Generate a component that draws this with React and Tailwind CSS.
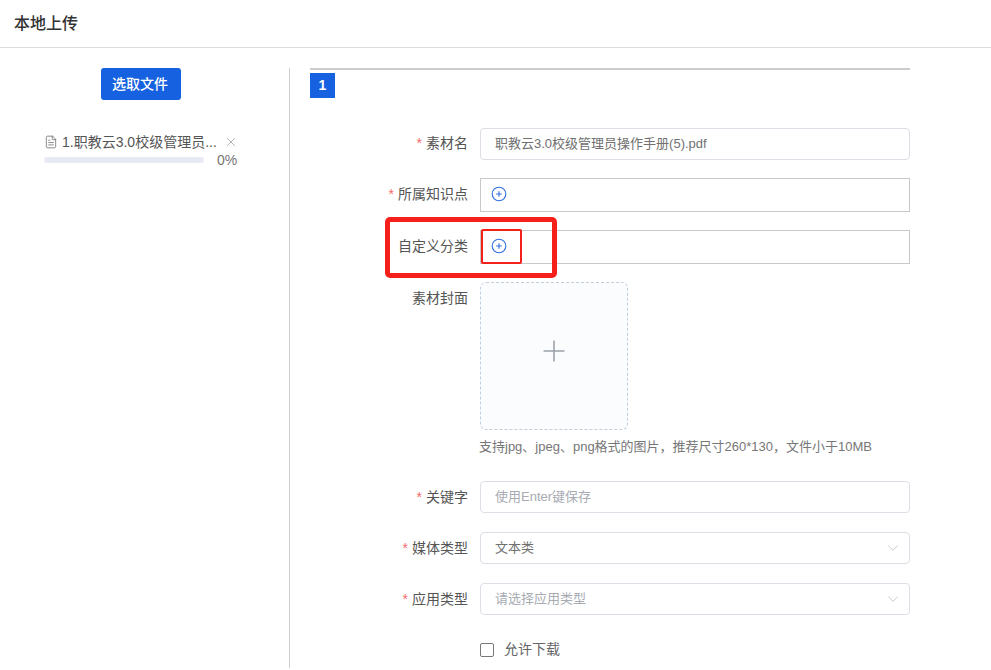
import { ChevronDown, FileText, X, Plus } from 'lucide-react';

const FONT = 'font-["Liberation_Sans","Noto_Sans_CJK_SC",sans-serif]';

function Label({ text, required, className = '' }) {
  return (
    <div className={`w-[170px] shrink-0 pr-[12px] text-right text-[14px] leading-[20px] text-[#555] ${className}`}>
      {required && <span className="mr-[4px] text-[#f56c6c]">*</span>}
      {text}
    </div>
  );
}

function AddIcon() {
  return (
    <svg className="-mt-[2px]" width="16" height="16" viewBox="0 0 16 16" fill="none" stroke="#2f6fe0" strokeWidth="1.1">
      <circle cx="8" cy="8" r="6.8" />
      <path d="M8 5.2v5.6M5.2 8h5.6" />
    </svg>
  );
}

function TextBox({ value, placeholder, arrow }) {
  return (
    <div className="flex h-[32px] w-[430px] items-center justify-between rounded-[4px] border border-[#dcdfe6] pl-[14px] pr-[7px] text-[13px]">
      <span className={value ? 'text-[#707070]' : 'text-[#a8abb2]'}>{value || placeholder}</span>
      {arrow && <ChevronDown className="h-[18px] w-[18px] text-[#b4b8bf]" strokeWidth={1} />}
    </div>
  );
}

export default function App() {
  return (
    <div className={`relative h-[670px] w-[991px] overflow-hidden bg-white ${FONT}`}>
      <div className="flex h-[48px] items-center border-b border-[#dcdcdc] pl-[14px] text-[16px] font-medium text-[#333]">
        本地上传
      </div>

      <div className="flex pt-[20px]">
        {/* file list */}
        <div className="h-[600px] w-[290px] shrink-0 border-r border-[#cfcfcf] pl-[44px]">
          <button className="ml-[57px] flex h-[32px] w-[80px] items-center justify-center rounded-[3px] bg-[#1561e0] pr-[2px] text-[14px] font-medium text-white">
            选取文件
          </button>
          <div className="mt-[33px] flex h-[18px] items-center text-[14px] text-[#555]">
            <FileText className="mr-[4px] h-[14px] w-[14px] text-[#666]" strokeWidth={1.3} />
            <span className="w-[163px] whitespace-nowrap">1.职教云3.0校级管理员...</span>
            <X className="-ml-[1px] h-[14px] w-[14px] text-[#888]" strokeWidth={1.1} />
          </div>
          <div className="flex h-[18px] items-center">
            <div className="h-[6px] w-[160px] rounded-full bg-[#e6eaf5]" />
            <span className="ml-[13px] text-[14px] leading-none text-[#777]">0%</span>
          </div>
        </div>

        {/* form */}
        <div className="ml-[20px] w-[600px]">
          <div className="border-t-2 border-[#cccccc]">
            <div className="mt-[3px] flex h-[25px] w-[25px] items-center justify-center bg-[#1561e0] text-[14px] font-bold text-white">
              1
            </div>
          </div>

          <div className="mt-[30px] flex items-center">
            <Label text="素材名" required className="-mt-[2px]" />
            <TextBox value="职教云3.0校级管理员操作手册(5).pdf" />
          </div>

          <div className="mt-[18px] flex items-center">
            <Label text="所属知识点" required className="-mt-[2px]" />
            <div className="flex h-[34px] w-[430px] items-center border border-[#c8c8c8] pl-[10px]">
              <AddIcon />
            </div>
          </div>

          <div className="mt-[18px] flex items-center">
            <Label text="自定义分类" className="-mt-[2px]" />
            <div className="flex h-[34px] w-[430px] items-center border border-[#c8c8c8] pl-[10px]">
              <AddIcon />
            </div>
          </div>

          <div className="mt-[18px] flex items-start">
            <Label text="素材封面" className="pt-[6px]" />
            <div>
              <div className="flex h-[148px] w-[148px] items-center justify-center rounded-[6px] border border-dashed border-[#c0cfe0] bg-[#fbfcfe] pb-[10px] pr-[1px]">
                <Plus className="h-[34px] w-[34px] text-[#9aa0a8]" strokeWidth={1.1} />
              </div>
              <p className="-ml-[1px] mt-[8px] whitespace-nowrap text-[13px] leading-[17px] text-[#777]">
                支持jpg、jpeg、png格式的图片，推荐尺寸260*130，文件小于10MB
              </p>
            </div>
          </div>

          <div className="mt-[26px] flex items-center">
            <Label text="关键字" required />
            <TextBox placeholder="使用Enter键保存" />
          </div>

          <div className="mt-[19px] flex items-center">
            <Label text="媒体类型" required />
            <TextBox value="文本类" arrow />
          </div>

          <div className="mt-[19px] flex items-center">
            <Label text="应用类型" required />
            <TextBox placeholder="请选择应用类型" arrow />
          </div>

          <div className="ml-[170px] mt-[24px] flex items-center text-[14px] text-[#666]">
            <span className="mr-[10px] h-[14px] w-[14px] rounded-[2px] border border-[#777]" />
            允许下载
          </div>
        </div>
      </div>

      {/* red annotation boxes drawn over the screenshot */}
      <div className="absolute left-[385px] top-[217px] h-[61px] w-[172px] rounded-[5px] border-[5px] border-[#f5201a]" />
      <div className="absolute left-[481px] top-[229px] h-[35px] w-[41px] rounded-[2px] border-2 border-[#f5201a]" />
    </div>
  );
}
